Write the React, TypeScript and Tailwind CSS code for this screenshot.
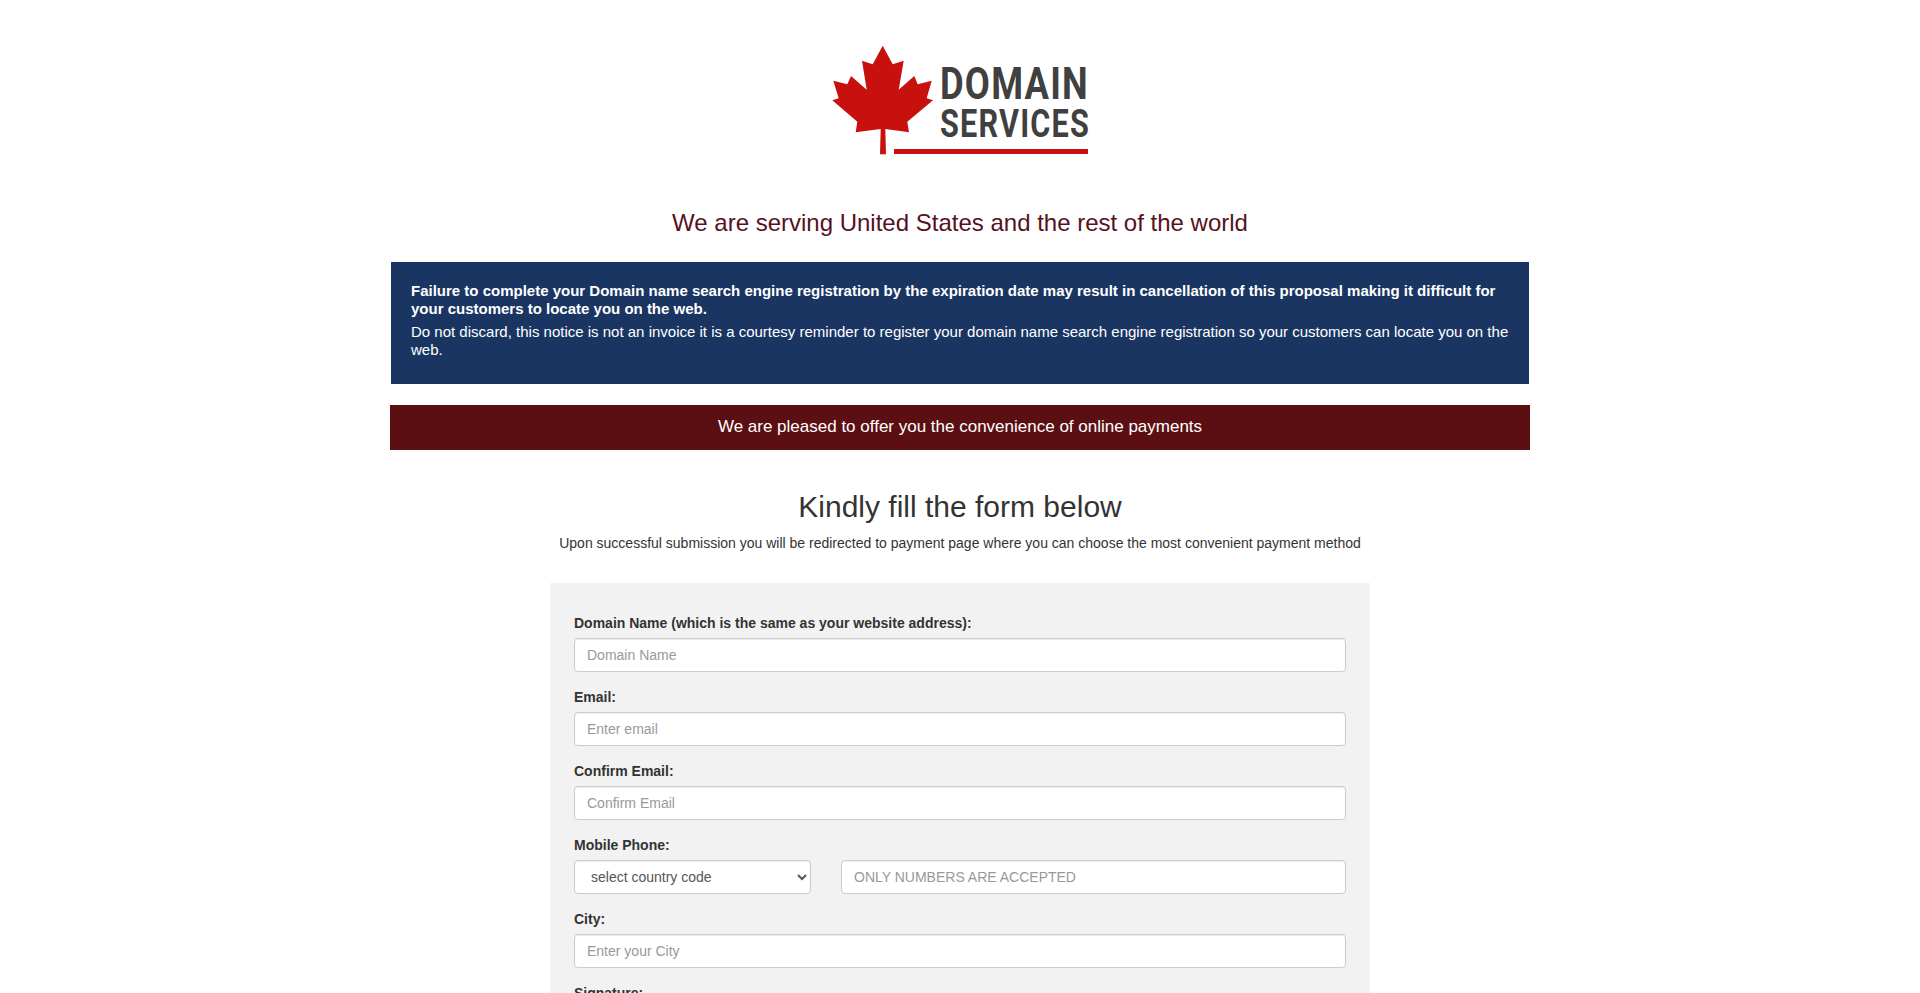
const LEAF =
  "50.7,-0.3 60.7,18.3 71.7,14.7 66.7,43.7 82.3,30 85.7,38.3 99.7,34.7 94.7,52.3 101,54.3 75.3,75.7 77,86.3 53.3,83 54,108.3 48,108.3 48.7,83 23.7,86.3 25.3,75.7 0.3,54.3 6.7,52.3 1.3,34.7 15.3,38.3 19,30 34.7,43.7 30,14.7 40.7,18.3";

function Logo() {
  return (
    <svg width="256" height="110" viewBox="0 0 256 110" className="mx-auto block overflow-visible">
      <polygon points={LEAF} fill="#c8110f" />
      <text x="108" y="53" fontFamily="Roboto, sans-serif" fontWeight="700" fontSize="44.6" letterSpacing="1.5" fill="#404040" textLength="149" lengthAdjust="spacingAndGlyphs">
        DOMAIN
      </text>
      <text x="108" y="90.6" fontFamily="Roboto, sans-serif" fontWeight="700" fontSize="38.5" letterSpacing="1.5" fill="#404040" textLength="150" lengthAdjust="spacingAndGlyphs">
        SERVICES
      </text>
      <rect x="62" y="103" width="194" height="5" fill="#c8110f" />
    </svg>
  );
}

const inputClass =
  "block w-full h-[34px] px-3 py-1.5 text-sm text-[#555] bg-white border border-[#ccc] rounded shadow-[inset_0_1px_1px_rgba(0,0,0,0.075)] placeholder:text-[#999] placeholder:opacity-100";

function Field({ label, placeholder }: { label: string; placeholder?: string }) {
  return (
    <div className="mb-[15px]">
      <label className="block mb-[5px] text-sm leading-5 font-bold text-[#333]">{label}</label>
      <input type="text" className={inputClass} placeholder={placeholder} />
    </div>
  );
}

export default function App() {
  return (
    <div className="h-[993px] overflow-hidden bg-white font-['Liberation_Sans',Arial,sans-serif] text-sm text-[#333]">
      <div className="w-[1140px] mx-auto pt-[46px]">
        <Logo />

        <h3 className="mt-[54px] text-center text-2xl leading-[26.4px] text-[#58101e]">
          We are serving United States and the rest of the world
        </h3>

        {/* notice */}
        <div className="mt-[26px] mx-px px-5 pt-5 pb-[25px] bg-[#1a3562] text-white text-[15px] leading-[18px]">
          <p className="font-bold mb-[5px]">
            Failure to complete your Domain name search engine registration by the expiration date may result in cancellation of this proposal making it difficult for your customers to locate you on the web.
          </p>
          <p>
            Do not discard, this notice is not an invoice it is a courtesy reminder to register your domain name search engine registration so your customers can locate you on the web.
          </p>
        </div>

        <div className="mt-[21px] h-[45px] pb-0.5 flex items-center justify-center bg-[#5c0f12] text-white text-[17px]">
          We are pleased to offer you the convenience of online payments
        </div>

        <h2 className="mt-10 text-center text-[30px] leading-[33px] text-[#333]">Kindly fill the form below</h2>
        <p className="mt-2.5 text-center text-sm leading-5">
          Upon successful submission you will be redirected to payment page where you can choose the most convenient payment method
        </p>

        {/* form */}
        <form className="mt-[30px] w-[820px] mx-auto px-6 pt-[30px] pb-6 bg-[#f2f2f2]">
          <Field label="Domain Name (which is the same as your website address):" placeholder="Domain Name" />
          <Field label="Email:" placeholder="Enter email" />
          <Field label="Confirm Email:" placeholder="Confirm Email" />
          <div className="mb-[15px]">
            <label className="block mb-[5px] text-sm leading-5 font-bold text-[#333]">Mobile Phone:</label>
            <div className="flex gap-[30px]">
              <select className="block w-[237px] h-[34px] px-3 text-sm text-[#555] bg-white border border-[#ccc] rounded shadow-[inset_0_1px_1px_rgba(0,0,0,0.075)]">
                <option>select country code</option>
              </select>
              <input type="text" className={inputClass + " flex-1"} placeholder="ONLY NUMBERS ARE ACCEPTED" />
            </div>
          </div>
          <Field label="City:" placeholder="Enter your City" />
          <Field label="Signature:" placeholder="" />
        </form>
      </div>
    </div>
  );
}
